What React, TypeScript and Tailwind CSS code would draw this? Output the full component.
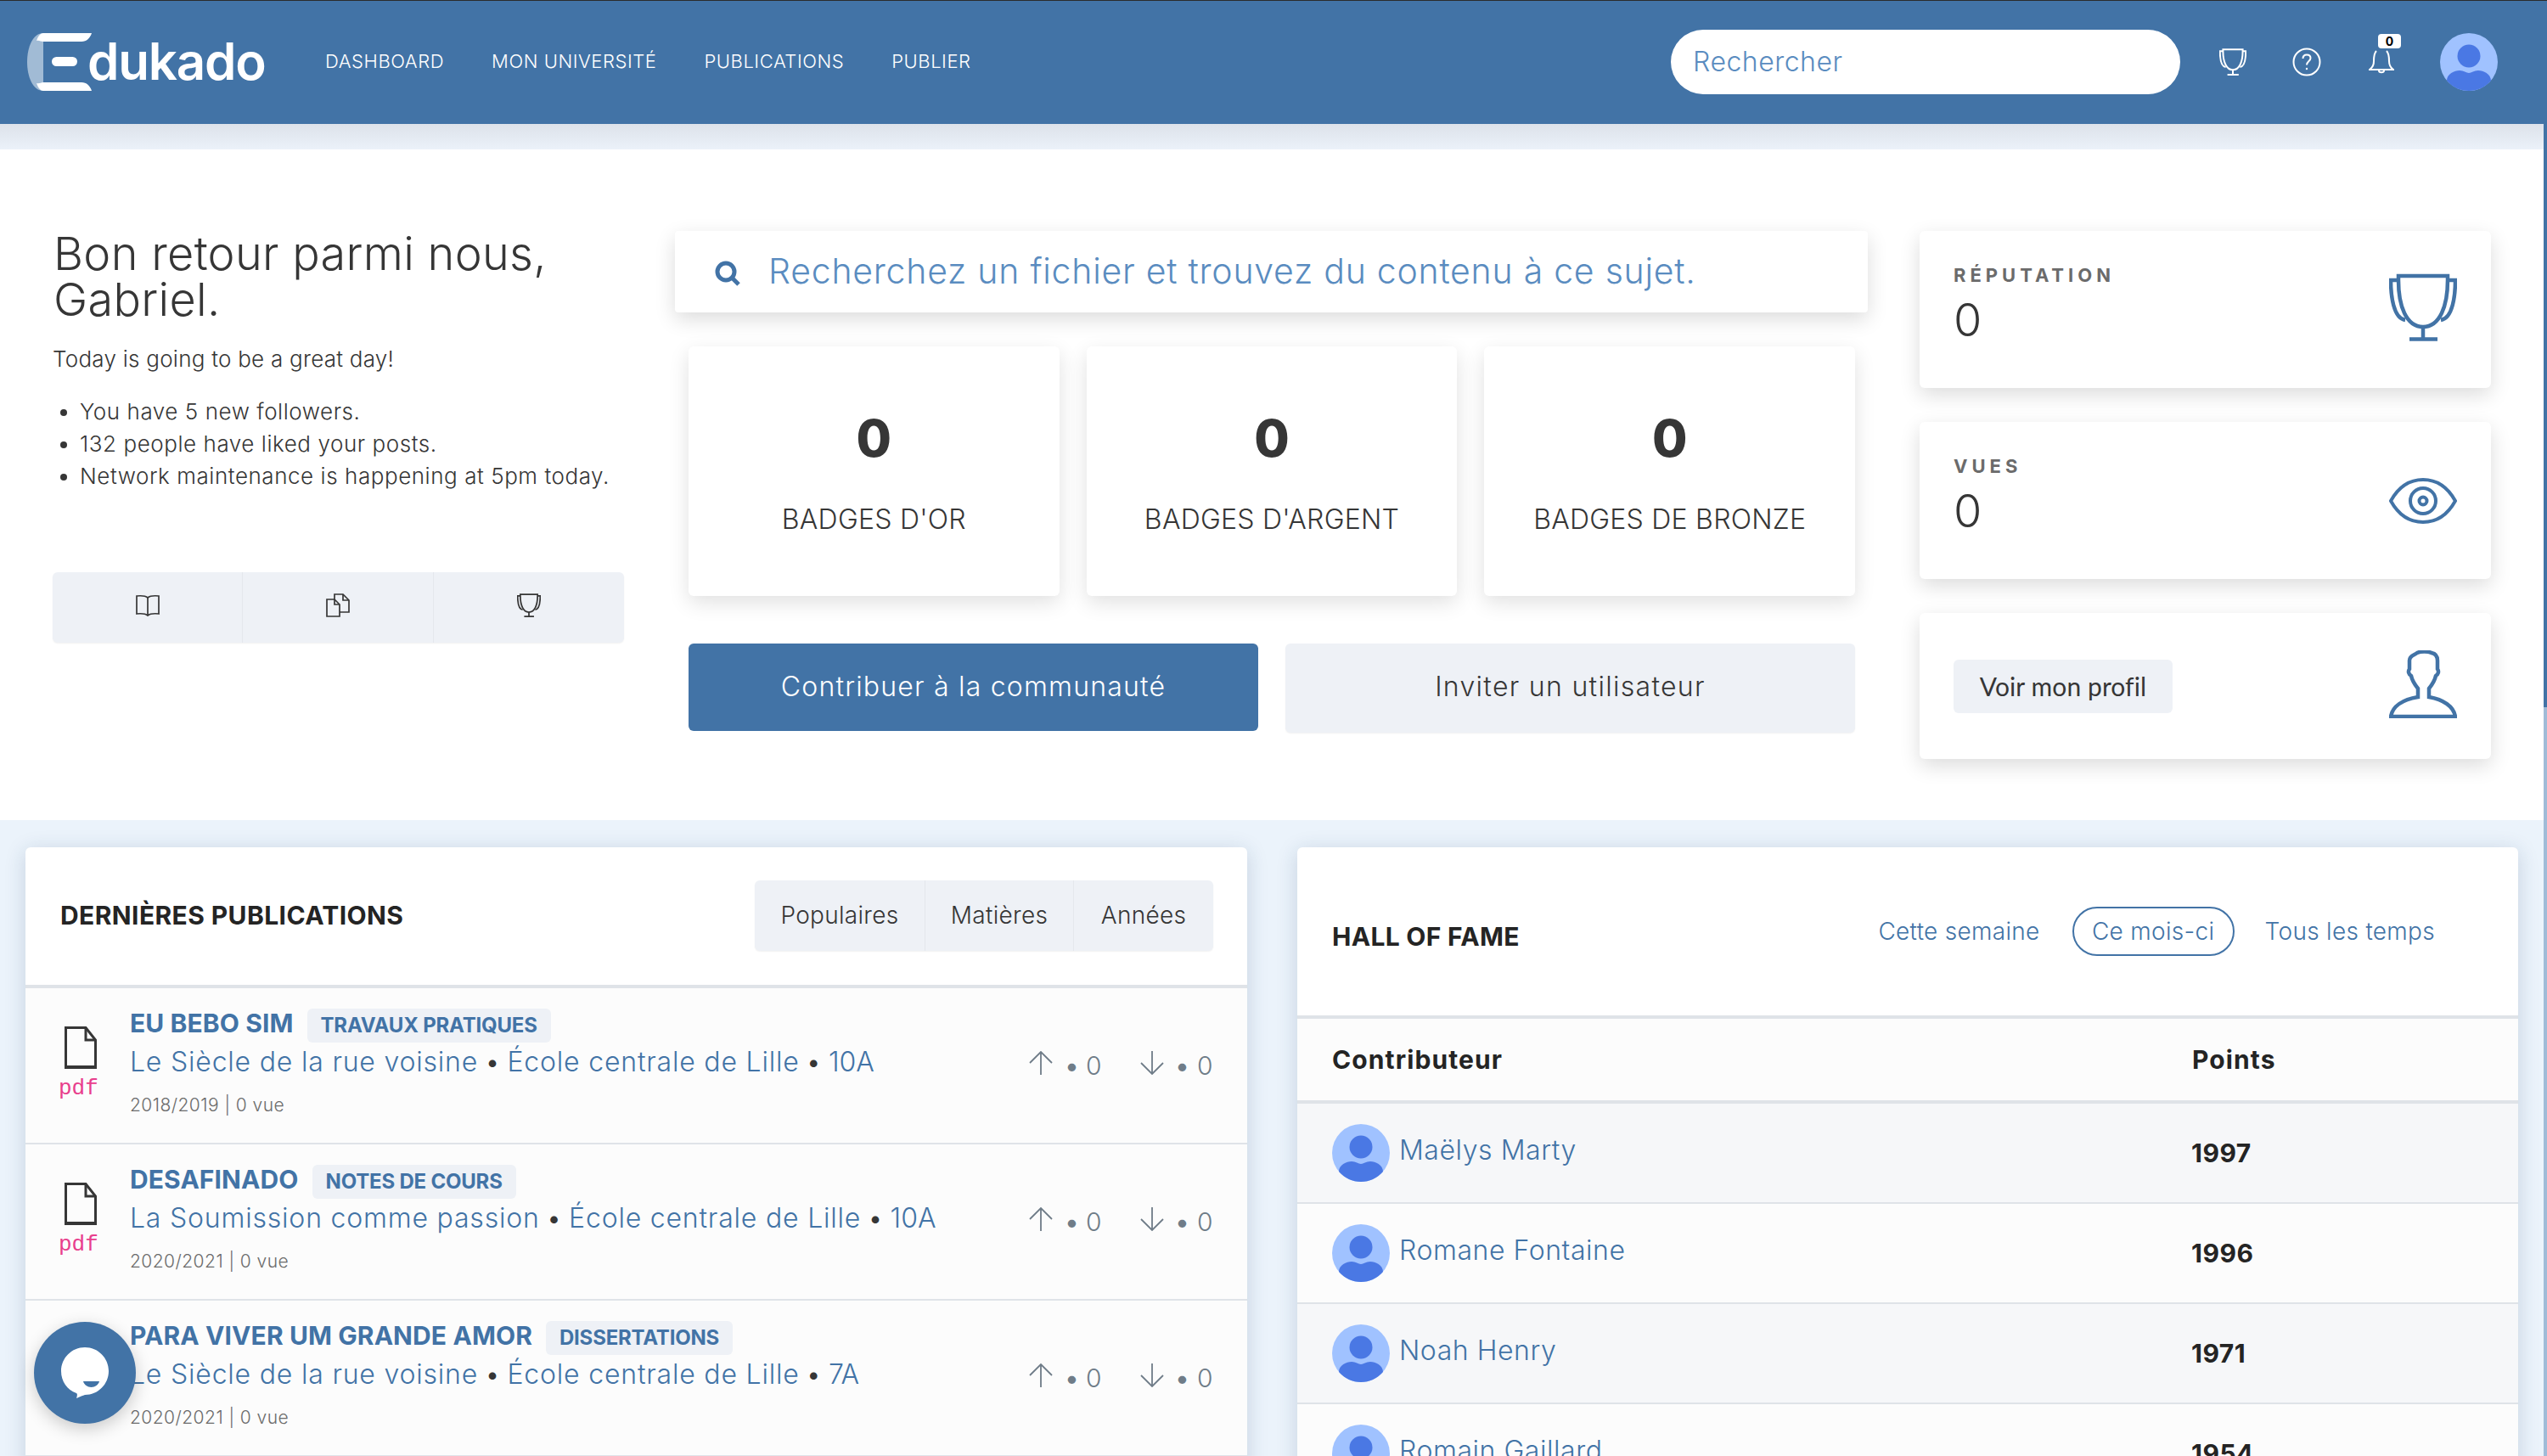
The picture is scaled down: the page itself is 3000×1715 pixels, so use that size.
import React from "react";

const TrophyIcon = ({ className, strokeWidth = 4.5 }: { className: string; strokeWidth?: number }) => (
  <svg viewBox="0 0 80 80" fill="none" stroke="currentColor" strokeWidth={strokeWidth} className={className}>
    <path d="M11 3H69V8C69 38 60 63 40 63C20 63 11 38 11 8Z" />
    <path d="M11 8H2C2 26 5 53 19 55" />
    <path d="M69 8H78C78 26 75 53 61 55" />
    <path d="M40 63V77M24 77.500H57" />
  </svg>
);

const EyeIcon = () => (
  <svg viewBox="0 0 80 54" fill="none" stroke="currentColor" strokeWidth="4" className="w-[80px] h-[54px] text-[#4273a6]">
    <path d="M2 27C12 9 26 2 40 2C54 2 68 9 78 27C68 45 54 52 40 52C26 52 12 45 2 27Z" />
    <circle cx="40" cy="27" r="15" />
    <circle cx="40" cy="27" r="4.500" />
  </svg>
);

const PersonIcon = () => (
  <svg viewBox="0 0 80 80" fill="none" stroke="currentColor" strokeWidth="4.500" className="w-[80px] h-[80px] text-[#4273a6]">
    <path d="M2 78C4 66 16 58 34 55V45C30 40 27 35 26 30C23 28 22 25 24 22V12C24 6 30 6 33 3C37 1 46 1 50 3C55 4 57 8 57 12V22C59 25 58 28 55 30C54 35 51 40 47 45V55C64 58 76 66 78 78Z" />
  </svg>
);

const BookIcon = () => (
  <svg viewBox="0 0 28 26" fill="none" stroke="currentColor" strokeWidth="1.700" className="w-[28px] h-[26px]">
    <path d="M14 4C11 1.500 6 1.500 1 2V23C6 22.500 11 22.500 14 25C17 22.500 22 22.500 27 23V2C22 1.500 17 1.500 14 4Z" />
    <path d="M14 4V25" />
  </svg>
);

const FilesIcon = () => (
  <svg viewBox="0 0 28 28" fill="none" stroke="currentColor" strokeWidth="1.700" className="w-[28px] h-[28px]">
    <path d="M10 7V1H20L27 8V22H16" />
    <path d="M20 1V8H27" />
    <path d="M1 7H10L16 13V27H1Z" />
    <path d="M10 7V13H16" />
  </svg>
);

const FileIcon = () => (
  <svg viewBox="0 0 38 50" fill="none" stroke="#363636" strokeWidth="3" className="w-[38px] h-[50px]">
    <path d="M1.500 1.500H25L36.500 16V48.500H1.500Z" />
    <path d="M25 1.500V16H36.500" />
    <path d="M1.500 48H36.500" strokeWidth="4" />
  </svg>
);

const ArrowIcon = ({ down }: { down?: boolean }) => (
  <svg viewBox="0 0 28 28" fill="none" stroke="#6f7c88" strokeWidth="1.800" className={down ? "w-[28px] h-[28px] rotate-180" : "w-[28px] h-[28px]"}>
    <path d="M14 28V1M1 14L14 1L27 14" />
  </svg>
);

const Avatar = () => (
  <svg viewBox="0 0 68 68" className="w-[68px] h-[68px] shrink-0">
    <circle cx="34" cy="34" r="34" fill="#a0c2ff" />
    <circle cx="34" cy="27" r="13.500" fill="#4a78e4" />
    <path d="M8 56C8 48 17 44 23 44C28 44 31 47 34 47C37 47 40 44 45 44C51 44 60 48 60 56C53 64 44 68 34 68C24 68 15 64 8 56Z" fill="#4a78e4" />
  </svg>
);

const Logo = () => (
  <div className="flex items-center w-[351px] shrink-0">
    <svg viewBox="0 0 76 68" className="w-[76px] h-[68px] shrink-0">
      <path d="M19 0C7 0 0 16 0 34C0 52 7 68 19 68Z" fill="#a1bbd5" />
      <path d="M19 0H76C74 6 70 10 64 10H19C16 10 14 8 11 9C13 3 16 0 19 0Z" fill="#fff" />
      <path d="M19 68H76C74 62 70 58 64 58H19C16 58 14 60 11 59C13 65 16 68 19 68Z" fill="#fff" />
      <rect x="29" y="28" width="30" height="11" rx="5.500" fill="#fff" />
    </svg>
    <span className="font-semibold text-[60px] leading-none tracking-[-1.2px] text-white -ml-[5px] mt-[-2px]">
      dukado
    </span>
  </div>
);

const navItems = ["DASHBOARD", "MON UNIVERSITÉ", "PUBLICATIONS", "PUBLIER"];

const Header = () => (
  <header className="h-[146px] bg-[#4273a6] border-t border-t-[#2b2b2b] flex items-center shrink-0 pl-[32px] pr-[58px] pb-[2px]">
    <Logo />
    <nav className="flex items-center gap-[56px] text-white text-[22px] font-light tracking-[0.55px]">
      {navItems.map((item) => (
        <span key={item}>{item}</span>
      ))}
    </nav>
    <div className="ml-auto flex items-center">
      <div className="w-[600px] h-[76px] bg-white rounded-full flex items-center pl-[26px] text-[32px] font-light text-[#5a8cc0] tracking-[0.5px]">
        Rechercher
      </div>
      <TrophyIcon className="w-[32px] h-[32px] text-white ml-[46px]" strokeWidth={5} />
      <svg viewBox="0 0 34 34" fill="none" stroke="#fff" strokeWidth="2" className="w-[34px] h-[34px] ml-[54px]">
        <circle cx="17" cy="17" r="15.500" />
        <path d="M12.500 13C12.500 10 14.500 8.500 17 8.500C19.500 8.500 21.500 10 21.500 12.500C21.500 16 17 16 17 20.500" />
        <circle cx="17" cy="25" r="1.200" fill="#fff" stroke="none" />
      </svg>
      <div className="relative ml-[56px] w-[29px] h-[28px]">
        <svg viewBox="0 0 30 28" fill="none" stroke="#fff" strokeWidth="2" className="w-[30px] h-[28px]">
          <path d="M9 1C6 4 6 8 6 13C6 18 4 21 1 23H29C26 21 24 18 24 13C24 8 24 4 21 1" />
          <path d="M12 24C12 27 18 27 18 24" />
        </svg>
        <span className="absolute -top-[19px] left-[11px] w-[27px] h-[17px] bg-white rounded-[4px] text-black text-[14px] font-bold leading-[17px] text-center">
          0
        </span>
      </div>
      <div className="ml-[55px]">
        <Avatar />
      </div>
    </div>
  </header>
);

const bullets = [
  "You have 5 new followers.",
  "132 people have liked your posts.",
  "Network maintenance is happening at 5pm today.",
];

const Welcome = () => (
  <section className="w-[673px] shrink-0 flex flex-col">
    <h1 className="text-[54px] leading-[54px] font-light text-[#363636] tracking-[0.3px] pl-[1px]">
      Bon retour parmi nous,
      <br />
      Gabriel.
    </h1>
    <p className="mt-[24px] text-[26px] leading-[38px] font-light text-[#363636] tracking-[0.25px]">Today is going to be a great day!</p>
    <ul className="mt-[24px] text-[26px] leading-[38px] font-light text-[#363636] tracking-[0.55px] list-disc pl-[32px]">
      {bullets.map((b) => (
        <li key={b}>{b}</li>
      ))}
    </ul>
    <div className="mt-[94px] h-[83px] bg-[#eef1f6] rounded-[6px] shadow-[0_1px_2px_rgba(0,0,0,0.06)] grid grid-cols-3 divide-x divide-[#e4e7ec] text-[#363636]">
      <div className="flex items-center justify-center pb-[6px]"><BookIcon /></div>
      <div className="flex items-center justify-center pb-[6px]"><FilesIcon /></div>
      <div className="flex items-center justify-center pb-[6px]"><TrophyIcon className="w-[28px] h-[28px]" strokeWidth={5} /></div>
    </div>
  </section>
);

const badges = ["BADGES D'OR", "BADGES D'ARGENT", "BADGES DE BRONZE"];

const Middle = () => (
  <section className="w-[1405px] shrink-0 flex flex-col">
    <div className="h-[96px] bg-white rounded-[4px] shadow-[0_8px_24px_rgba(0,0,0,0.14)] flex items-center pl-[47px] text-[41px] font-light text-[#5a8cc0] tracking-[0.75px]">
      <svg viewBox="0 0 30 30" fill="none" stroke="#4273a6" strokeWidth="5" className="w-[30px] h-[30px] shrink-0 mr-[33px] mt-[3px]">
        <circle cx="13" cy="13" r="10" />
        <path d="M20 20L28 28" />
      </svg>
      Recherchez un fichier et trouvez du contenu à ce sujet.
    </div>
    <div className="pl-[16px] pr-[15px] mt-[40px] grid grid-cols-3 gap-[32px]">
      {badges.map((b) => (
        <div key={b} className="h-[294px] bg-white rounded-[6px] shadow-[0_8px_24px_rgba(0,0,0,0.12)] flex flex-col items-center text-[#363636]">
          <span className="mt-[76px] text-[60px] leading-[64px] font-extrabold">0</span>
          <span className="mt-[44px] text-[32px] leading-[40px] font-light tracking-[0.25px]">{b}</span>
        </div>
      ))}
    </div>
    <div className="pl-[16px] pr-[15px] mt-[56px] grid grid-cols-2 gap-[32px]">
      <button className="h-[103px] bg-[#4273a6] rounded-[6px] text-white text-[32px] font-light tracking-[1.2px] pb-[2px]">Contribuer à la communauté</button>
      <button className="h-[105px] bg-[#eef1f6] rounded-[6px] text-[#363636] text-[32px] font-light tracking-[1.3px] pb-[4px] shadow-[0_1px_2px_rgba(0,0,0,0.06)]">Inviter un utilisateur</button>
    </div>
  </section>
);

const StatCard = ({ label, icon }: { label: string; icon: React.ReactNode }) => (
  <div className="h-[185px] bg-white rounded-[6px] shadow-[0_8px_24px_rgba(0,0,0,0.14)] flex items-center justify-between pl-[40px] pr-[40px]">
    <div className="flex flex-col pb-[12px]">
      <span className="text-[22px] leading-[28px] font-bold tracking-[5px] text-[#6b6b6b]">{label}</span>
      <span className="mt-[8px] text-[54px] leading-[62px] font-light text-[#363636]">0</span>
    </div>
    {icon}
  </div>
);

const RightCol = () => (
  <section className="w-[673px] ml-[1px] shrink-0 flex flex-col gap-[40px]">
    <StatCard label="RÉPUTATION" icon={<TrophyIcon className="w-[80px] h-[80px] text-[#4273a6] -mt-[5px]" />} />
    <StatCard label="VUES" icon={<EyeIcon />} />
    <div className="h-[172px] bg-white rounded-[6px] shadow-[0_8px_24px_rgba(0,0,0,0.14)] flex items-center justify-between px-[40px]">
      <span className="w-[258px] h-[63px] bg-[#eef1f6] rounded-[6px] flex items-center justify-center font-['Lato',sans-serif] text-[30px] tracking-[0.1px] text-[#363636]">
        Voir mon profil
      </span>
      <div className="-mt-[5px]">
        <PersonIcon />
      </div>
    </div>
  </section>
);

type Pub = { title: string; tag: string; first: string; level: string; meta: string };

const pubs: Pub[] = [
  { title: "EU BEBO SIM", tag: "TRAVAUX PRATIQUES", first: "Le Siècle de la rue voisine", level: "10A", meta: "2018/2019 | 0 vue" },
  { title: "DESAFINADO", tag: "NOTES DE COURS", first: "La Soumission comme passion", level: "10A", meta: "2020/2021 | 0 vue" },
  { title: "PARA VIVER UM GRANDE AMOR", tag: "DISSERTATIONS", first: "Le Siècle de la rue voisine", level: "7A", meta: "2020/2021 | 0 vue" },
];

const PubRow = ({ pub }: { pub: Pub }) => (
  <div className="h-[184px] bg-[#fcfcfc] border-b-2 border-b-[#dfe3e8] flex pl-[46px] pr-[40px]">
    <div className="w-[77px] shrink-0 pt-[45px] flex flex-col">
      <FileIcon />
      <span className="font-['Liberation_Mono',monospace] text-[26px] leading-[30px] text-[#e83e8c] -ml-[7px] mt-[8px]">pdf</span>
    </div>
    <div className="flex-1 pt-[24px] min-w-0">
      <div className="flex items-center h-[40px] gap-[16px]">
        <span className="text-[30px] font-bold text-[#4273a6] tracking-[0.1px] -mt-[6px]">{pub.title}</span>
        <span className="h-[40px] px-[16px] bg-[#eef1f6] rounded-[6px] flex items-center text-[24px] font-bold text-[#4273a6] tracking-[-0.2px]">{pub.tag}</span>
      </div>
      <p className="mt-[1px] text-[32px] leading-[44px] font-light text-[#4273a6] tracking-[0.8px] whitespace-nowrap">
        {pub.first} <span className="text-[#363636] -mx-[2px]">•</span> École centrale de Lille <span className="text-[#363636] -mx-[2px]">•</span> <span className="tracking-[0px]">{pub.level}</span>
      </p>
      <p className="mt-[14px] text-[21px] leading-[30px] font-light text-[#6b6b6b] tracking-[0.45px]">{pub.meta}</p>
    </div>
    <div className="flex items-start pt-[74px] text-[30px] leading-[34px] font-light text-[#6f7c88]">
      <ArrowIcon />
      <span className="ml-[14px] w-[25px] font-normal">•</span>
      <span className="w-[36px]">0</span>
      <span className="w-[28px]" />
      <ArrowIcon down />
      <span className="ml-[13px] w-[26px] font-normal">•</span>
      <span className="w-[19px]">0</span>
    </div>
  </div>
);

const Publications = () => (
  <section className="w-[1439px] bg-white rounded-t-[6px] shadow-[0_4px_24px_rgba(30,60,100,0.18)]">
    <div className="h-[166px] border-b-4 border-b-[#dfe3e8] flex items-center justify-between pl-[41px] pr-[40px]">
      <h2 className="text-[30px] font-bold text-[#242424] tracking-[0.4px] -mt-[2px]">DERNIÈRES PUBLICATIONS</h2>
      <div className="h-[83px] mb-[2px] bg-[#eef1f6] rounded-[6px] shadow-[0_1px_2px_rgba(0,0,0,0.06)] flex divide-x divide-[#e4e7ec] text-[28px] font-light text-[#363636] tracking-[0.3px]">
        <span className="w-[201px] flex items-center justify-center">Populaires</span>
        <span className="w-[175px] flex items-center justify-center">Matières</span>
        <span className="w-[164px] flex items-center justify-center">Années</span>
      </div>
    </div>
    {pubs.map((p) => (
      <PubRow key={p.title} pub={p} />
    ))}
  </section>
);

const fame = [
  { name: "Maëlys Marty", points: 1997 },
  { name: "Romane Fontaine", points: 1996 },
  { name: "Noah Henry", points: 1971 },
  { name: "Romain Gaillard", points: 1954 },
];

const HallOfFame = () => (
  <section className="w-[1438px] bg-white rounded-t-[6px] shadow-[0_4px_24px_rgba(30,60,100,0.18)]">
    <div className="h-[202px] border-b-4 border-b-[#dfe3e8] flex items-center pl-[41px] pr-[98px]">
      <h2 className="text-[30px] font-bold text-[#242424] tracking-[0.3px] mt-[12px]">HALL OF FAME</h2>
      <div className="ml-auto flex items-center text-[28px] font-light text-[#4273a6] tracking-[0.3px]">
        <span>Cette semaine</span>
        <span className="ml-[38px] h-[58px] w-[191px] rounded-full border-2 border-[#4273a6] flex items-center justify-center">Ce mois-ci</span>
        <span className="ml-[36px]">Tous les temps</span>
      </div>
    </div>
    <div className="h-[100px] bg-[#fcfcfc] border-b-4 border-b-[#dfe3e8] flex items-center pl-[41px] text-[30px] font-bold text-[#242424] tracking-[1.1px]">
      <span className="w-[1013px]">Contributeur</span>
      <span>Points</span>
    </div>
    {fame.map((f, i) => (
      <div key={f.name} className={i % 2 === 0 ? "h-[118px] bg-[#f6f7f9] border-b-2 border-b-[#dfe3e8] flex items-center pl-[41px]" : "h-[118px] bg-[#fcfcfc] border-b-2 border-b-[#dfe3e8] flex items-center pl-[41px]"}>
        <div className="w-[1012px] flex items-center gap-[11px]">
          <Avatar />
          <span className="text-[32px] font-light text-[#4273a6] tracking-[0.55px] -mt-[6px]">{f.name}</span>
        </div>
        <span className="text-[30px] font-bold text-[#242424] tracking-[0.5px]">{f.points}</span>
      </div>
    ))}
  </section>
);

const App: React.FC = () => {
  return (
    <div className="relative w-[3000px] h-[1715px] overflow-hidden bg-[#ebf3fb] font-['Inter','Noto_Sans',sans-serif]">
      <Header />
      <div className="h-[30px] bg-gradient-to-b from-[#dde2ea] to-[#ebf1f9]" />
      <div className="h-[790px] bg-white flex gap-[60px] pl-[62px] pt-[96px]">
        <Welcome />
        <Middle />
        <RightCol />
      </div>
      <div className="flex gap-[59px] pl-[30px] pt-[32px]">
        <Publications />
        <HallOfFame />
      </div>
      {/* chat bubble */}
      <div className="absolute left-[40px] top-[1557px] w-[120px] h-[120px] rounded-full bg-[#4273a6] shadow-[0_6px_20px_rgba(0,0,0,0.2)]">
        <svg viewBox="0 0 120 120" className="w-[120px] h-[120px]">
          <path d="M60 30C75.500 30 88 42.500 88 58C88 73.500 75.500 86 60 86C59 86 50 90 50 90C50 90 52 85 50 84C39 80 32 70 32 58C32 42.500 44.500 30 60 30Z" fill="#fff" />
          <path d="M58 70H77C76 74 72 77 67.500 77C63 77 59 74 58 70Z" fill="#4273a6" />
        </svg>
      </div>
      {/* scrollbar */}
      <div className="absolute right-0 top-[146px] bottom-0 w-[4px] bg-[#a0bbd7]">
        <div className="h-[687px] bg-[#4273a6]" />
      </div>
    </div>
  );
};

export default App;
